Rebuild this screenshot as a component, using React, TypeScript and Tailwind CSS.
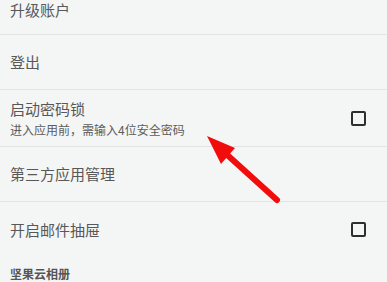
import React from 'react';

const font = { fontFamily: '"Noto Sans CJK SC", "Noto Sans", sans-serif' };

const Checkbox: React.FC = () => (
  <div className="w-[15px] h-[15px] border-2 border-[#2e2e2e] rounded-[2px]" />
);

const Row: React.FC<{ title: string; sub?: string; check?: boolean; h: string }> = ({ title, sub, check, h }) => (
  <div className={`${h} flex items-center justify-between pl-[10px] pr-[21px] border-b border-[#e2e3e3]`}>
    <div className="flex flex-col">
      <span className="text-[15px] leading-[20px] text-[#585858]">{title}</span>
      {sub && <span className="text-[12px] leading-[16px] mt-[3px] text-[#5c5c5c]">{sub}</span>}
    </div>
    {check && <Checkbox />}
  </div>
);

export default function App() {
  return (
    <div className="relative w-[387px] h-[282px] overflow-hidden bg-[#f4f5f5]" style={font}>
      {/* top row, scrolled partly out of view */}
      <div className="h-[35px] pl-[10px] border-b border-[#e2e3e3]">
        <span className="block text-[15px] leading-[20px] text-[#585858]">升级账户</span>
      </div>
      <Row h="h-[55px]" title="登出" />
      <Row h="h-[57px]" title="启动密码锁" sub="进入应用前，需输入4位安全密码" check />
      <Row h="h-[55px]" title="第三方应用管理" />
      <div className="h-[55px] flex items-center justify-between pl-[10px] pr-[21px]">
        <span className="text-[15px] leading-[20px] text-[#585858]">开启邮件抽屉</span>
        <Checkbox />
      </div>
      <div className="pl-[10px] pt-[10px]">
        <span className="block text-[12px] leading-[14px] font-bold text-[#555]">坚果云相册</span>
      </div>

      {/* red annotation arrow */}
      <svg className="absolute inset-0 pointer-events-none" width="387" height="282" viewBox="0 0 387 282">
        <line x1="277" y1="200" x2="224" y2="152" stroke="#f20d0d" strokeWidth="6" strokeLinecap="round" />
        <polygon points="207,136 235,148 221,164" fill="#f20d0d" />
      </svg>
    </div>
  );
}
